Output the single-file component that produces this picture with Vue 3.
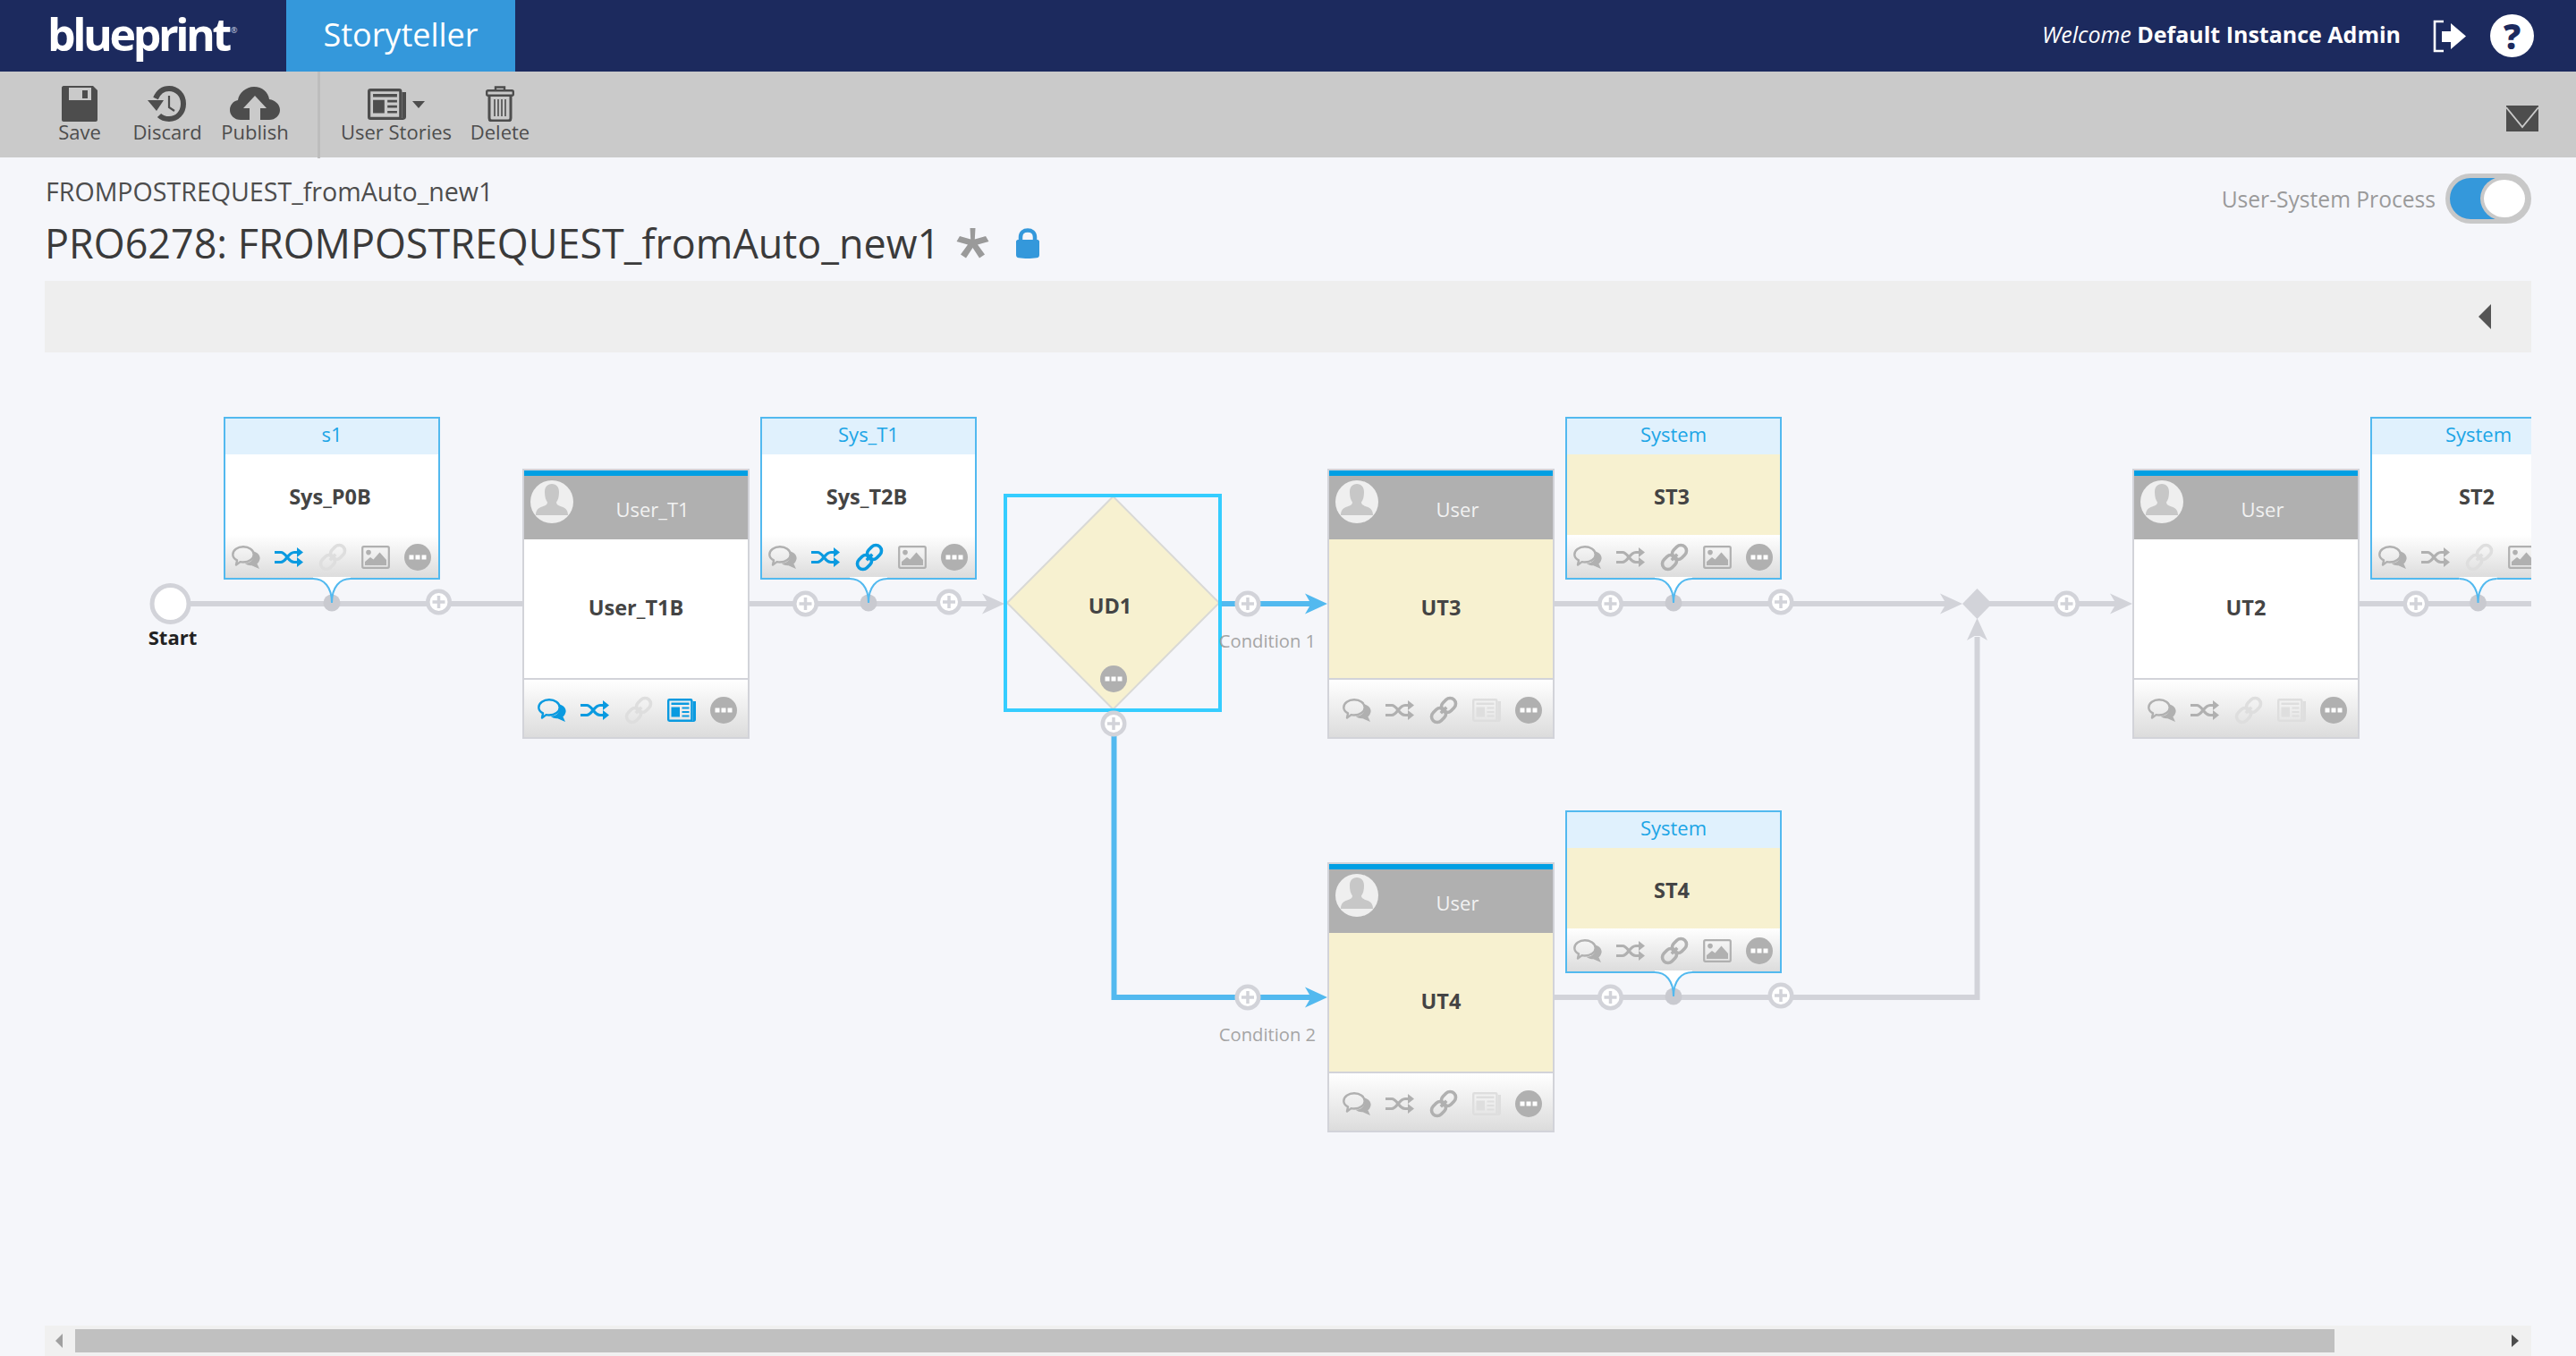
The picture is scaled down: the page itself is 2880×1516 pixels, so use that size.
<script setup>
const g = 'gray', l = 'light', b = 'blue'
const mk = (chat, shuffle, link, media, mediaName) => [
  { n: 'chat', c: chat }, { n: 'shuffle', c: shuffle }, { n: 'link', c: link }, { n: mediaName, c: media }, { n: 'more', c: g }
]
const sizes = { chat: [32, 26], shuffle: [32, 22], link: [32, 32], image: [32, 26], news: [32, 26], more: [30, 30] }

const systems = [
  { x: 250, y: 466, head: 's1', title: 'Sys_P0B', cream: false, icons: mk(g, b, l, g, 'image') },
  { x: 850, y: 466, head: 'Sys_T1', title: 'Sys_T2B', cream: false, icons: mk(g, b, b, g, 'image') },
  { x: 1750, y: 466, head: 'System', title: 'ST3', cream: true, icons: mk(g, g, g, g, 'image') },
  { x: 2650, y: 466, head: 'System', title: 'ST2', cream: false, icons: mk(g, g, l, g, 'image') },
  { x: 1750, y: 906, head: 'System', title: 'ST4', cream: true, icons: mk(g, g, g, g, 'image') }
]
const users = [
  { x: 584, y: 524, head: 'User_T1', title: 'User_T1B', cream: false, icons: mk(b, b, l, b, 'news') },
  { x: 1484, y: 524, head: 'User', title: 'UT3', cream: true, icons: mk(g, g, g, l, 'news') },
  { x: 2384, y: 524, head: 'User', title: 'UT2', cream: false, icons: mk(g, g, l, l, 'news') },
  { x: 1484, y: 964, head: 'User', title: 'UT4', cream: true, icons: mk(g, g, g, l, 'news') }
]
const pluses = [[490.5, 673], [900.5, 675], [1061, 673], [1395, 675], [1245, 809], [1800.5, 675], [1991, 673], [2310.5, 675], [2701, 675], [1395, 1115], [1800.5, 1115], [1991, 1113]]
const dots = [[371, 674], [971, 674], [1871, 674], [2770.5, 674], [1871, 1114]]
const tails = [[371, 648, 674], [971, 648, 674], [1871, 648, 674], [2770.5, 648, 674], [1871, 1088, 1114]]
const tailFill = (x, y, e) => `M${x - 21} ${y - 3}H${x + 21}V${y}C${x + 10} ${y} ${x} ${y + 8} ${x} ${e}C${x} ${y + 8} ${x - 10} ${y} ${x - 21} ${y}Z`
const tailLine = (x, y, e) => `M${x - 21} ${y - 1}C${x - 9} ${y - 1} ${x} ${y + 8} ${x} ${e}C${x} ${y + 8} ${x + 9} ${y - 1} ${x + 21} ${y - 1}`
const arrow = (t, y) => `M${t} ${y}L${t - 25} ${y - 11.5}L${t - 20} ${y - 3}V${y + 3}L${t - 25} ${y + 11.5}Z`
const labels = [
  { x: 193, y: 712, t: 'Start', k: 'start' },
  { x: 1241, y: 676.5, t: 'UD1', k: 'strong' },
  { x: 1417, y: 715.5, t: 'Condition 1', k: 'cond' },
  { x: 1417, y: 1155.5, t: 'Condition 2', k: 'cond' }
]
const pos = (x, y) => ({ left: `${x - 50}px`, top: `${y - 394}px` })
const tools = [
  { id: 'save', t: 'Save', w: 98 },
  { id: 'discard', t: 'Discard', w: 98 },
  { id: 'publish', t: 'Publish', w: 98 }
]
</script>

<template>
  <div class="app">
    <svg class="defs" width="0" height="0" aria-hidden="true">
      <symbol id="chat" viewBox="0 0 32 26">
        <path d="M24.5 6.5C30 8 32.4 12 31.4 15.6 30.8 18 29.6 19.4 28.4 20.2L31 26 22.4 22.2C19 22.4 16 21.4 14.4 19.6 20.6 20 26.6 15.4 24.5 6.5Z" fill="currentColor" />
        <path d="M6 16.4C3 14.8 1.3 12.4 1.3 9.9 1.3 5.1 6.6 1.3 13 1.3S24.7 5.1 24.7 9.9 19.4 18.5 13 18.5C11.8 18.5 10.6 18.4 9.6 18.1L5 21.6Z" fill="none" stroke="currentColor" stroke-width="2.4" stroke-linejoin="round" />
      </symbol>
      <symbol id="shuffle" viewBox="0 0 32 22">
        <path d="M0 5.5H7C13 5.5 15 16.5 22 16.5H27M0 16.5H7C13 16.5 15 5.5 22 5.5H27" fill="none" stroke="currentColor" stroke-width="3.2" />
        <path d="M25 0L32 5.5 25 11ZM25 11L32 16.5 25 22Z" fill="currentColor" />
      </symbol>
      <symbol id="link" viewBox="0 0 32 32">
        <g transform="rotate(45 16 16)" fill="none" stroke="currentColor" stroke-width="3.6">
          <rect x="9.7" y="-0.5" width="12.6" height="17.5" rx="6.3" />
          <rect x="9.7" y="15" width="12.6" height="17.5" rx="6.3" />
          <path d="M16 11.5V20.5" />
        </g>
      </symbol>
      <symbol id="image" viewBox="0 0 32 26">
        <rect x="1.2" y="1.2" width="29.6" height="23.6" rx="1.5" fill="none" stroke="currentColor" stroke-width="2.2" />
        <circle cx="8" cy="7.6" r="2.8" fill="currentColor" />
        <path d="M4 22V18L10 13 13.5 15.5 20.5 7.5 28 16V22Z" fill="currentColor" />
      </symbol>
      <symbol id="news" viewBox="0 0 32 26">
        <path d="M28.6 3H32V23.5C32 25 31 26 29.5 26H3.2L28.6 24.5Z" fill="currentColor" />
        <rect x="1.2" y="1.2" width="26.2" height="23.6" rx="1.2" fill="none" stroke="currentColor" stroke-width="2.4" />
        <path d="M4.5 4.5H24.5V7H4.5ZM4.5 9.5H14V20.5H4.5ZM16.5 9.5H24.5V11.5H16.5ZM16.5 14H24.5V16H16.5ZM16.5 18.5H24.5V20.5H16.5Z" fill="currentColor" />
      </symbol>
      <symbol id="more" viewBox="0 0 30 30">
        <circle cx="15" cy="15" r="15" fill="currentColor" />
        <path d="M5.5 12.5H10.5V17.5H5.5ZM12.5 12.5H17.5V17.5H12.5ZM19.5 12.5H24.5V17.5H19.5Z" fill="#fff" />
      </symbol>
      <symbol id="avatar" viewBox="0 0 48 48">
        <circle cx="24" cy="24" r="24" fill="#efefef" />
        <path d="M6 39C6 33 9 31 13 29.500C17 28 19 27 19 24.500 17 22 16 18 16 13 16 7.500 19 4 24 4S32 7.500 32 13C32 18 31 22 29 24.500 29 27 31 28 35 29.500 39 31 42 33 42 39Z" fill="#c7c7c7" />
      </symbol>
    </svg>

    <header class="topbar">
      <div class="logo"><span class="logo-word">blueprint</span><span class="logo-reg">®</span></div>
      <div class="tab">Storyteller</div>
      <div class="user-area">
        <span class="welcome"><em>Welcome</em> <strong>Default Instance Admin</strong></span>
        <svg class="logout" width="38" height="37" viewBox="0 0 38 37">
          <path d="M13 2H3V35H13" fill="none" stroke="#fff" stroke-width="2.600" />
          <path d="M11 13H21V4L38 18.500 21 33V25H11Z" fill="#fff" />
        </svg>
        <span class="help">?</span>
      </div>
    </header>

    <nav class="toolbar">
      <button v-for="tool in tools" :key="tool.id" class="tool" :style="{ width: tool.w + 'px' }">
        <span class="tool-icon">
          <svg v-if="tool.id === 'save'" width="40" height="40" viewBox="0 0 40 40">
            <path d="M2 0H35L40 5V38C40 39 39 40 38 40H2C1 40 0 39 0 38V2C0 1 1 0 2 0Z" fill="#4d4d4d" />
            <rect x="8" y="2" width="25" height="14" fill="#cacaca" />
            <rect x="23" y="5" width="6" height="9" fill="#4d4d4d" />
          </svg>
          <svg v-else-if="tool.id === 'discard'" width="44" height="40" viewBox="0 0 44 40">
            <path d="M9 14C12 7 17 3 24 3 33 3 40 10 40 20S33 37 24 37C20 37 16 36 13 33" fill="none" stroke="#4d4d4d" stroke-width="6" />
            <path d="M0 16L18 16 10 28Z" fill="#4d4d4d" />
            <path d="M24 11V24L30 28" fill="none" stroke="#4d4d4d" stroke-width="2.200" />
          </svg>
          <svg v-else width="56" height="38" viewBox="0 0 56 38">
            <path d="M12 37C5 37 0 32 0 26 0 20 4 16 9 15 10 7 18 0 27 0 36 0 43 6 44 14 51 15 56 20 56 26 56 32 51 37 44 37Z" fill="#4d4d4d" />
            <path d="M28 10L41 24H34V37H22V24H15Z" fill="#cacaca" />
          </svg>
        </span>
        <span class="tool-label">{{ tool.t }}</span>
      </button>
      <span class="tool-sep"></span>
      <button class="tool stories">
        <span class="tool-icon news-icon">
          <svg class="news-glyph" width="43" height="35"><use href="#news" /></svg>
          <span class="caret"></span>
        </span>
        <span class="tool-label">User Stories</span>
      </button>
      <button class="tool delete">
        <span class="tool-icon">
          <svg width="32" height="40" viewBox="0 0 32 40" fill="none" stroke="#4d4d4d">
            <path d="M11 5V1.500H21V5" stroke-width="2.400" />
            <rect x="1.200" y="5.200" width="29.600" height="5.500" rx="1.500" stroke-width="2.400" />
            <path d="M4 11V36C4 38 5 39 7 39H25C27 39 28 38 28 36V11" stroke-width="3" />
            <path d="M10 15V34M14 15V34M18 15V34M22 15V34" stroke-width="1.600" />
          </svg>
        </span>
        <span class="tool-label">Delete</span>
      </button>
      <svg class="mail" width="36" height="29" viewBox="0 0 36 29">
        <rect width="36" height="29" fill="#4d4d4d" />
        <path d="M0 2L18 24 36 2" fill="none" stroke="#cacaca" stroke-width="1.800" />
      </svg>
    </nav>

    <main class="main">
      <section class="title-row">
        <div class="titles">
          <div class="crumb">FROMPOSTREQUEST_fromAuto_new1</div>
          <div class="title-line">
            <h1 class="title">PRO6278: FROMPOSTREQUEST_fromAuto_new1</h1>
            <svg class="star" width="37" height="34" viewBox="0 0 37 34">
              <path d="M15.500 0H21.500L20.800 12.500 33 9 36.500 15 24 18.500 32 29.500 26 33.500 18.500 22 11 33.500 5 29.500 13 18.500 0.500 15 4 9 16.200 12.500Z" fill="#9a9a9a" />
            </svg>
            <svg class="lock" width="26" height="34" viewBox="0 0 26 34">
              <path d="M5 15V10C5 5 8.500 2.500 13 2.500S21 5 21 10V15" fill="none" stroke="#3498db" stroke-width="4.500" />
              <path d="M2 13H24C25 13 26 14 26 15V30C26 32 25 33 23 33.300 17 34.200 9 34.200 3 33.300 1 33 0 32 0 30V15C0 14 1 13 2 13Z" fill="#3498db" />
            </svg>
          </div>
        </div>
        <div class="mode">
          <span class="mode-label">User-System Process</span>
          <span class="switch"><span class="knob"></span></span>
        </div>
      </section>

      <section class="panel"><span class="panel-arrow"></span></section>

      <section class="canvas">
        <article v-for="c in systems" :key="c.title" class="card sys" :class="{ cream: c.cream }" :style="pos(c.x, c.y)">
          <div class="sys-head">{{ c.head }}</div>
          <div class="sys-body">{{ c.title }}</div>
          <div class="foot">
            <svg v-for="i in c.icons" :key="i.n" class="ico" :class="i.c" :width="sizes[i.n][0]" :height="sizes[i.n][1]"><use :href="'#' + i.n" /></svg>
          </div>
        </article>

        <article v-for="c in users" :key="c.title" class="card usr" :class="{ cream: c.cream }" :style="pos(c.x, c.y)">
          <div class="usr-head">
            <svg class="avatar" width="48" height="48"><use href="#avatar" /></svg>
            <span class="usr-name">{{ c.head }}</span>
          </div>
          <div class="usr-body">{{ c.title }}</div>
          <div class="foot">
            <svg v-for="i in c.icons" :key="i.n" class="ico" :class="i.c" :width="sizes[i.n][0]" :height="sizes[i.n][1]"><use :href="'#' + i.n" /></svg>
          </div>
        </article>

        <svg class="edges" width="2780" height="1088" viewBox="50 394 2780 1088">
          <g fill="none" stroke="#d2d3d9" stroke-width="6">
            <path d="M190 675H584M838 675H1104M1738 675H2174M2210 675H2364M2638 675H2840M1738 1115H2210.500V712" />
          </g>
          <path :d="arrow(1123, 675)" fill="#d2d3d9" />
          <path :d="arrow(2194, 675)" fill="#d2d3d9" />
          <path :d="arrow(2384, 675)" fill="#d2d3d9" />
          <path d="M2210.500 691L2199 716 2207.500 711H2213.500L2222 716Z" fill="#d2d3d9" />
          <path d="M2210.500 658L2194 675 2210.500 692 2227 675Z" fill="#d2d3d9" />

          <g fill="none" stroke="#52b9ef" stroke-width="6">
            <path d="M1364 675H1466M1245.500 820V1115H1466" />
          </g>
          <path :d="arrow(1484, 675)" fill="#52b9ef" />
          <path :d="arrow(1484, 1115)" fill="#52b9ef" />

          <path d="M1244.500 555L1363 674 1244.500 793 1126 674Z" fill="#f7f1d0" stroke="#d9d9d6" stroke-width="2" />
          <rect x="1124" y="554" width="240" height="240" fill="none" stroke="#35cdff" stroke-width="4" />
          <use href="#more" x="1230" y="744" width="30" height="30" class="ico gray" />

          <circle cx="190.500" cy="675" r="20.500" fill="#fff" stroke="#d2d3d9" stroke-width="5" />
          <circle v-for="d in dots" :key="d[0] + '-' + d[1]" :cx="d[0]" :cy="d[1]" r="9.500" fill="#c9cad0" />
          <g v-for="t in tails" :key="'t' + t[0] + t[1]">
            <path :d="tailFill(t[0], t[1], t[2])" fill="#fff" />
            <path :d="tailLine(t[0], t[1], t[2])" fill="none" stroke="#52b9ef" stroke-width="2" />
          </g>
          <g v-for="p in pluses" :key="'p' + p[0] + p[1]">
            <circle :cx="p[0]" :cy="p[1]" r="14.500" fill="#d2d3d9" />
            <circle :cx="p[0]" :cy="p[1]" r="10" fill="#fff" />
            <path :d="`M${p[0] - 7} ${p[1]}H${p[0] + 7}M${p[0]} ${p[1] - 7}V${p[1] + 7}`" stroke="#d2d3d9" stroke-width="3.500" />
          </g>
        </svg>

        <span v-for="t in labels" :key="t.t" class="lbl" :class="t.k" :style="pos(t.x, t.y)">{{ t.t }}</span>
      </section>

      <div class="scrollbar">
        <span class="sb-left"></span>
        <span class="sb-thumb"></span>
        <span class="sb-right"></span>
      </div>
    </main>
  </div>
</template>

<style>
html, body { margin: 0; padding: 0; background: #f5f6fa; }
</style>

<style scoped>
.app {
  width: 2880px;
  height: 1516px;
  display: flex;
  flex-direction: column;
  overflow: hidden;
  background: #f5f6fa;
  font-family: "Open Sans", "Noto Sans", sans-serif;
  color: #4d4d4d;
}
.defs { position: absolute; }

.topbar {
  height: 80px;
  flex: none;
  display: flex;
  align-items: stretch;
  background: #1c2a5e;
  color: #fff;
}
.logo {
  width: 267px;
  padding-left: 53px;
  display: flex;
  align-items: flex-start;
  white-space: nowrap;
}
.logo-word {
  font-size: 50px;
  font-weight: 700;
  line-height: 76px;
  letter-spacing: -3.400px;
}
.logo-reg { font-size: 9px; line-height: 14px; margin-top: 27px; margin-left: 2px; color: #cfd3e0; }
.tab {
  width: 256px;
  background: #3498db;
  font-size: 36px;
  line-height: 78px;
  text-align: center;
}
.user-area {
  margin-left: auto;
  padding-right: 47px;
  display: flex;
  align-items: center;
}
.welcome { font-size: 25px; line-height: 34px; margin-top: -4px; white-space: nowrap; }
.welcome em { font-style: italic; font-weight: 400; }
.welcome strong { font-weight: 700; }
.logout { margin-left: 35px; }
.help {
  margin-left: 27px;
  width: 49px;
  height: 48px;
  border-radius: 50%;
  background: #fff;
  color: #1c2a5e;
  font-size: 38px;
  font-weight: 800;
  line-height: 48px;
  text-align: center;
}

.toolbar {
  height: 96px;
  flex: none;
  display: flex;
  align-items: flex-start;
  box-sizing: border-box;
  padding: 16px 42px 0 40px;
  background: #cacaca;
}
.tool {
  display: flex;
  flex-direction: column;
  align-items: center;
  padding: 0;
  border: 0;
  background: none;
  font: inherit;
  color: inherit;
}
.tool-icon {
  height: 40px;
  display: flex;
  align-items: center;
  justify-content: center;
}
.tool-label {
  margin-top: -3.5px;
  font-size: 22px;
  line-height: 28px;
  white-space: nowrap;
}
.tool-sep {
  width: 3px;
  height: 97px;
  margin: -16px 20px 0 21px;
  background: #bdbdbd;
}
.stories { width: 130px; }
.delete { width: 102px; }
.news-icon { gap: 7px; padding-top: 1px; box-sizing: border-box; }
.news-glyph { color: #4d4d4d; }
.caret {
  width: 0;
  height: 0;
  border-left: 7px solid transparent;
  border-right: 7px solid transparent;
  border-top: 8px solid #4d4d4d;
  margin-top: 1px;
}
.mail { margin-left: auto; margin-top: 22px; }

.main {
  flex: 1;
  min-height: 0;
  display: flex;
  flex-direction: column;
  padding: 0 50px;
}
.title-row {
  height: 138px;
  flex: none;
  box-sizing: border-box;
  padding-top: 19.500px;
  display: flex;
  justify-content: space-between;
  align-items: flex-start;
}
.titles { padding-top: 0; }
.crumb {
  font-size: 28.600px;
  line-height: 36px;
  padding-left: 1px;
}
.title-line {
  margin-top: 10.500px;
  height: 60px;
  display: flex;
  align-items: center;
}
.title {
  margin: 0;
  font-size: 44.900px;
  font-weight: 400;
  line-height: 60px;
  color: #3a3a3a;
  white-space: nowrap;
}
.star { margin-left: 18px; }
.lock { margin-left: 30px; }
.mode { display: flex; align-items: center; margin-top: -1.500px; }
.mode-label { font-size: 24.600px; color: #9a9a9a; }
.switch {
  margin-left: 11px;
  width: 96px;
  height: 56px;
  box-sizing: border-box;
  border: 5px solid #c8c8c8;
  border-radius: 28px;
  background: #3498db;
  position: relative;
}
.knob {
  position: absolute;
  right: -2px;
  top: -2px;
  width: 54px;
  height: 50px;
  box-sizing: border-box;
  border-radius: 50%;
  border: 4px solid #c8c8c8;
  background: #fff;
}

.panel {
  height: 80px;
  flex: none;
  background: #eeeeee;
  display: flex;
  align-items: center;
  justify-content: flex-end;
  padding-right: 45px;
}
.panel-arrow {
  width: 0;
  height: 0;
  border-top: 14px solid transparent;
  border-bottom: 14px solid transparent;
  border-right: 14px solid #555;
}

.canvas {
  flex: 1;
  min-height: 0;
  position: relative;
  overflow: hidden;
}
.card {
  position: absolute;
  box-sizing: border-box;
  display: flex;
  flex-direction: column;
  background: #fff;
}
.foot {
  display: flex;
  align-items: center;
  justify-content: space-between;
  box-sizing: border-box;
  background: linear-gradient(#fff, #dcdcdc);
}
.sys {
  width: 242px;
  height: 182px;
  border: 2px solid #52b9ef;
}
.sys-head {
  height: 40px;
  flex: none;
  background: #e0f1fd;
  color: #1ca5e6;
  font-size: 22px;
  line-height: 35px;
  text-align: center;
}
.sys-body, .usr-body {
  display: flex;
  align-items: center;
  justify-content: center;
  font-size: 23.500px;
  font-weight: 700;
  color: #444;
}
.sys-body {
  height: 90px;
  flex: none;
  padding: 3px 4px 0 0;
  box-sizing: border-box;
}
.sys .foot {
  flex: 1;
  padding: 1px 8px 0 7px;
}
.cream .sys-body, .cream .usr-body { background: #f7f1d0; }
.usr {
  width: 254px;
  height: 302px;
  border: 2px solid #d2d3d9;
}
.usr-head {
  height: 77px;
  flex: none;
  display: flex;
  align-items: flex-start;
  box-sizing: border-box;
  border-top: 6px solid #009fe3;
  background: #b0b0b0;
  padding: 5px 18px 0 7px;
  color: #f2f2f2;
}
.avatar { flex: none; }
.usr-name {
  flex: 1;
  text-align: center;
  font-size: 22px;
  line-height: 30px;
  margin-top: 16.500px;
}
.usr-body {
  height: 155px;
  flex: none;
  padding-bottom: 4px;
  box-sizing: border-box;
}
.usr .foot {
  flex: 1;
  border-top: 2px solid #d2d3d9;
  padding: 3px 12px 0 15px;
}
.ico.gray { color: #b0b0b0; }
.ico.light { color: #dedede; }
.ico.blue { color: #0a9ae0; }

.edges {
  position: absolute;
  left: 0;
  top: 0;
  pointer-events: none;
}
.lbl {
  position: absolute;
  transform: translate(-50%, -50%);
  white-space: nowrap;
}
.start { font-size: 22px; font-weight: 700; color: #222; }
.strong { font-size: 23.500px; font-weight: 700; color: #444; }
.cond { font-size: 20.200px; color: #a5a5a5; }

.scrollbar {
  height: 34px;
  flex: none;
  display: flex;
  align-items: center;
  background: #f0f0f0;
}
.sb-left {
  margin-left: 12px;
  width: 0;
  height: 0;
  border-top: 8px solid transparent;
  border-bottom: 8px solid transparent;
  border-right: 8px solid #a0a0a0;
}
.sb-thumb {
  margin-left: 14px;
  width: 2526px;
  height: 26px;
  background: #c0c0c0;
}
.sb-right {
  margin-left: 198px;
  width: 0;
  height: 0;
  border-top: 7px solid transparent;
  border-bottom: 7px solid transparent;
  border-left: 8px solid #4d4d4d;
}
</style>
